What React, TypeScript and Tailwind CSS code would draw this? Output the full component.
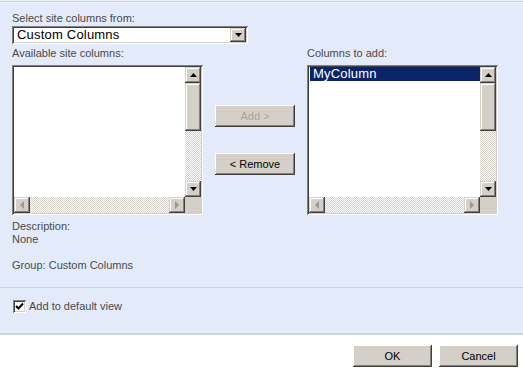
import React from 'react';

const raised =
  'bg-[#d4d0c8] shadow-[inset_-1px_-1px_#404040,inset_1px_1px_#d4d0c8,inset_-2px_-2px_#808080,inset_2px_2px_#ffffff]';
const button =
  'bg-[#d4d0c8] shadow-[inset_-1px_-1px_#404040,inset_1px_1px_#ffffff,inset_-2px_-2px_#808080]';
const sunken =
  'shadow-[inset_1px_1px_#808080,inset_-1px_-1px_#ffffff,inset_2px_2px_#404040,inset_-2px_-2px_#d4d0c8]';
const track =
  'bg-[image:repeating-conic-gradient(#d4d0c8_0%_25%,#ffffff_0%_50%)] bg-[length:2px_2px]';

type Dir = 'up' | 'down' | 'left' | 'right';

function Arrow({ dir, muted }: { dir: Dir; muted?: boolean }) {
  const vertical = dir === 'up' || dir === 'down';
  const points = {
    up: '0,4 7,4 3.5,0',
    down: '0,0 7,0 3.5,4',
    left: '4,0 4,8 0,4',
    right: '0,0 0,8 4,4',
  }[dir];
  return (
    <svg width={vertical ? 7 : 4} height={vertical ? 4 : 8} className="block">
      <polygon points={points} fill={muted ? '#9a9890' : '#000000'} />
    </svg>
  );
}

function ScrollButton({ dir, muted }: { dir: Dir; muted?: boolean }) {
  return (
    <div className={`w-4 h-4 shrink-0 flex items-center justify-center ${raised}`}>
      <Arrow dir={dir} muted={muted} />
    </div>
  );
}

function ListBox({ children }: { children?: React.ReactNode }) {
  return (
    <div className={`w-[191px] h-[150px] p-[2px] bg-white ${sunken}`}>
      <div className="flex h-full flex-col">
        <div className="flex flex-1 min-h-0">
          <div className="flex-1 bg-white">{children}</div>
          <div className="w-4 flex flex-col">
            <ScrollButton dir="up" />
            <div className={`h-[48px] ${raised}`} />
            <div className={`flex-1 ${track}`} />
            <ScrollButton dir="down" />
          </div>
        </div>
        <div className="flex h-4">
          <ScrollButton dir="left" muted />
          <div className={`flex-1 ${track}`} />
          <ScrollButton dir="right" muted />
          <div className="w-4 bg-[#d4d0c8]" />
        </div>
      </div>
    </div>
  );
}

export default function App() {
  return (
    <div className="w-[523px] h-[371px] bg-white font-['Liberation_Sans',Arial,sans-serif] text-[11px] leading-[13px] text-[#4a4a4a]">
      <div className="h-px bg-[#e9eef7]" />
      <div className="h-px bg-[#c9d0da]" />
      <div className="h-px bg-[#f0f4fc]" />
      <div className="h-[332px] bg-[#e3ebfa] border-b-2 border-[#d0d4da] flex flex-col">
        <div className="px-[12px] pt-[9px]">
          <div>Select site columns from:</div>
          <div className={`mt-px w-[236px] h-[18px] p-[2px] bg-white flex ${sunken}`}>
            <div className="flex-1 pl-[3px] text-[13px] leading-[14px] tracking-[0.2px] text-black">Custom Columns</div>
            <div className={`w-4 h-[14px] flex items-center justify-center ${raised}`}>
              <Arrow dir="down" />
            </div>
          </div>

          <div className="mt-[3px] flex gap-[12px]">
            <div className="flex flex-col">
              <div>Available site columns:</div>
              <div className="mt-[5px]">
                <ListBox />
              </div>
            </div>
            <div className="w-[80px] pt-[58px] flex flex-col">
              <div className={`h-[22px] flex items-center justify-center text-[#a7a59f] ${button}`}>Add &gt;</div>
              <div className={`mt-[26px] h-[22px] flex items-center justify-center text-black ${button}`}>&lt; Remove</div>
            </div>
            <div className="flex flex-col">
              <div>Columns to add:</div>
              <div className="mt-[5px]">
                <ListBox>
                  <div className="ml-px h-[14px] bg-[#0a246a] pl-[3px] text-[13px] leading-[14px] tracking-[0.2px] text-white">MyColumn</div>
                </ListBox>
              </div>
            </div>
          </div>

          <div className="mt-[5px]">Description:</div>
          <div>None</div>
          <div className="mt-[13px]">Group: Custom Columns</div>
        </div>

        <div className="mt-[15px] h-px bg-[#cbd4e2]" />

        <div className="px-[12px] pt-[12px] flex items-center gap-[3px]">
          <div className={`ml-px w-[13px] h-[13px] p-[2px] bg-white flex items-center justify-center ${sunken}`}>
            <svg width="9" height="9" viewBox="0 0 9 9" className="block">
              <polyline points="1,4 3.5,6.5 8,1.5" fill="none" stroke="#000000" strokeWidth="2" />
            </svg>
          </div>
          <div>Add to default view</div>
        </div>
      </div>

      <div className="mt-[10px] flex justify-end gap-[7px] pr-[5px]">
        <div className={`w-[79px] h-[22px] flex items-center justify-center text-black ${button}`}>OK</div>
        <div className={`w-[79px] h-[22px] flex items-center justify-center text-black ${button}`}>Cancel</div>
      </div>
    </div>
  );
}
